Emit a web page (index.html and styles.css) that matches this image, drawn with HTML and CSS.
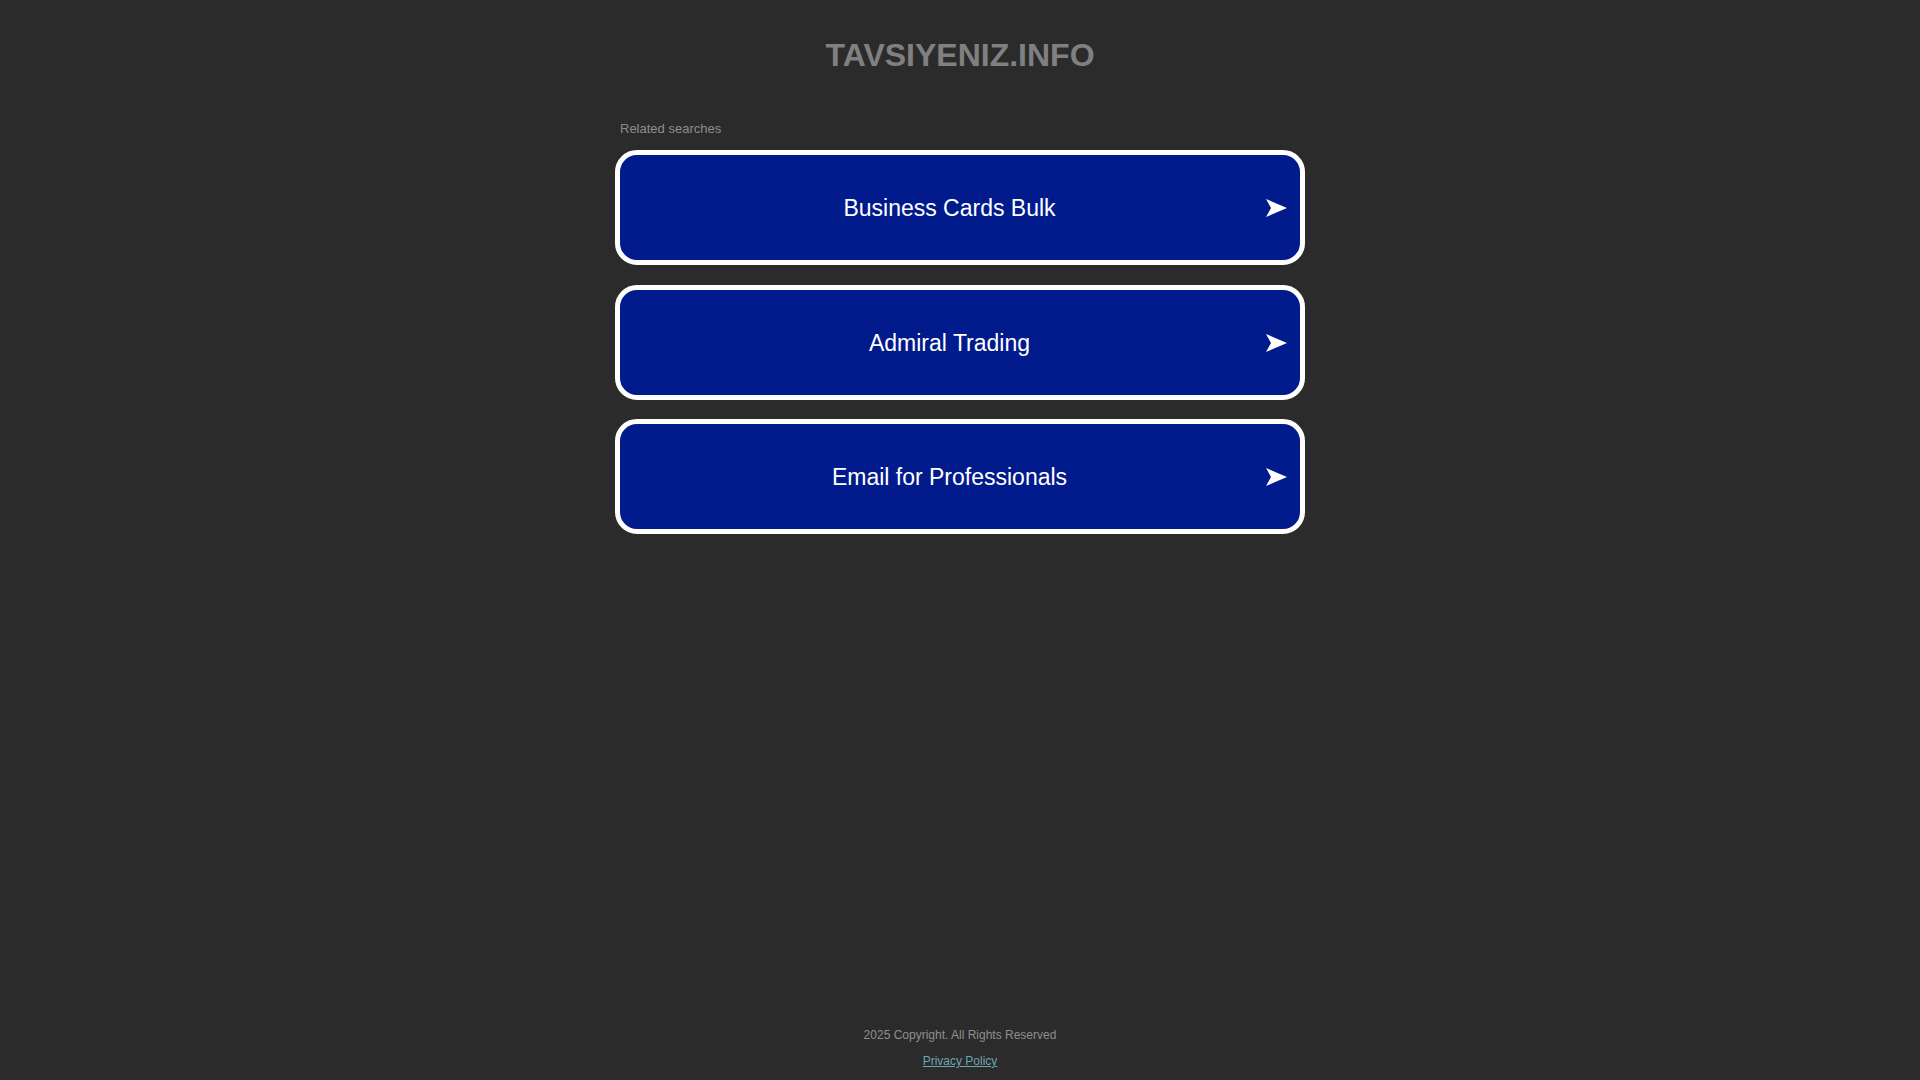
FILE: index.html
```html
<!DOCTYPE html>
<html lang="en">
<head>
<meta charset="utf-8">
<title>tavsiyeniz.info</title>
<link rel="stylesheet" href="styles.css">
</head>
<body>
<div class="page">
  <header class="header">
    <h1 class="domain">TAVSIYENIZ.INFO</h1>
  </header>
  <main class="content">
    <div class="related">Related searches</div>
    <div class="searches">
      <a class="search" href="#">
        <span class="search-text">Business Cards Bulk</span>
        <svg class="arrow" viewBox="0 0 21 18" width="21" height="18"><path d="M0 0 L21 9 L0 18 L5 9 Z"/></svg>
      </a>
      <a class="search" href="#">
        <span class="search-text">Admiral Trading</span>
        <svg class="arrow" viewBox="0 0 21 18" width="21" height="18"><path d="M0 0 L21 9 L0 18 L5 9 Z"/></svg>
      </a>
      <a class="search" href="#">
        <span class="search-text">Email for Professionals</span>
        <svg class="arrow" viewBox="0 0 21 18" width="21" height="18"><path d="M0 0 L21 9 L0 18 L5 9 Z"/></svg>
      </a>
    </div>
  </main>
  <footer class="footer">
    <div class="copyright">2025 Copyright. All Rights Reserved</div>
    <a class="privacy" href="#">Privacy Policy</a>
  </footer>
</div>
</body>
</html>
```

FILE: styles.css
```css
html, body {
  margin: 0;
  padding: 0;
  height: 100%;
}
body {
  background: #2b2b2b;
  font-family: "Liberation Sans", Arial, sans-serif;
  color: #919191;
}
.page {
  min-height: 100vh;
  display: flex;
  flex-direction: column;
  align-items: center;
  box-sizing: border-box;
}
.header {
  padding-top: 35px;
}
.domain {
  margin: 0;
  font-size: 32px;
  line-height: 40px;
  font-weight: bold;
  color: #808080;
  text-align: center;
}
.content {
  width: 690px;
  padding-top: 46px;
}
.related {
  font-size: 13px;
  line-height: 16px;
  color: #8e8e8e;
  padding-left: 5px;
  margin-bottom: 13px;
}
.searches {
  display: flex;
  flex-direction: column;
  gap: 19.5px;
}
.search {
  display: flex;
  align-items: center;
  height: 115px;
  box-sizing: border-box;
  border: 5px solid #ffffff;
  border-radius: 22px;
  background: #011a8c;
  color: #ffffff;
  text-decoration: none;
  padding: 1px 13px 0;
}
.search-text {
  flex: 1;
  text-align: center;
  font-size: 23px;
  line-height: 28px;
}
.arrow {
  flex: none;
  fill: #ffffff;
}
.footer {
  margin-top: auto;
  display: flex;
  flex-direction: column;
  align-items: center;
  gap: 10px;
  padding-bottom: 11px;
  font-size: 12px;
  line-height: 16px;
}
.copyright {
  color: #8f8f8f;
}
.privacy {
  color: #6aa6ae;
  text-decoration: underline;
}
```
